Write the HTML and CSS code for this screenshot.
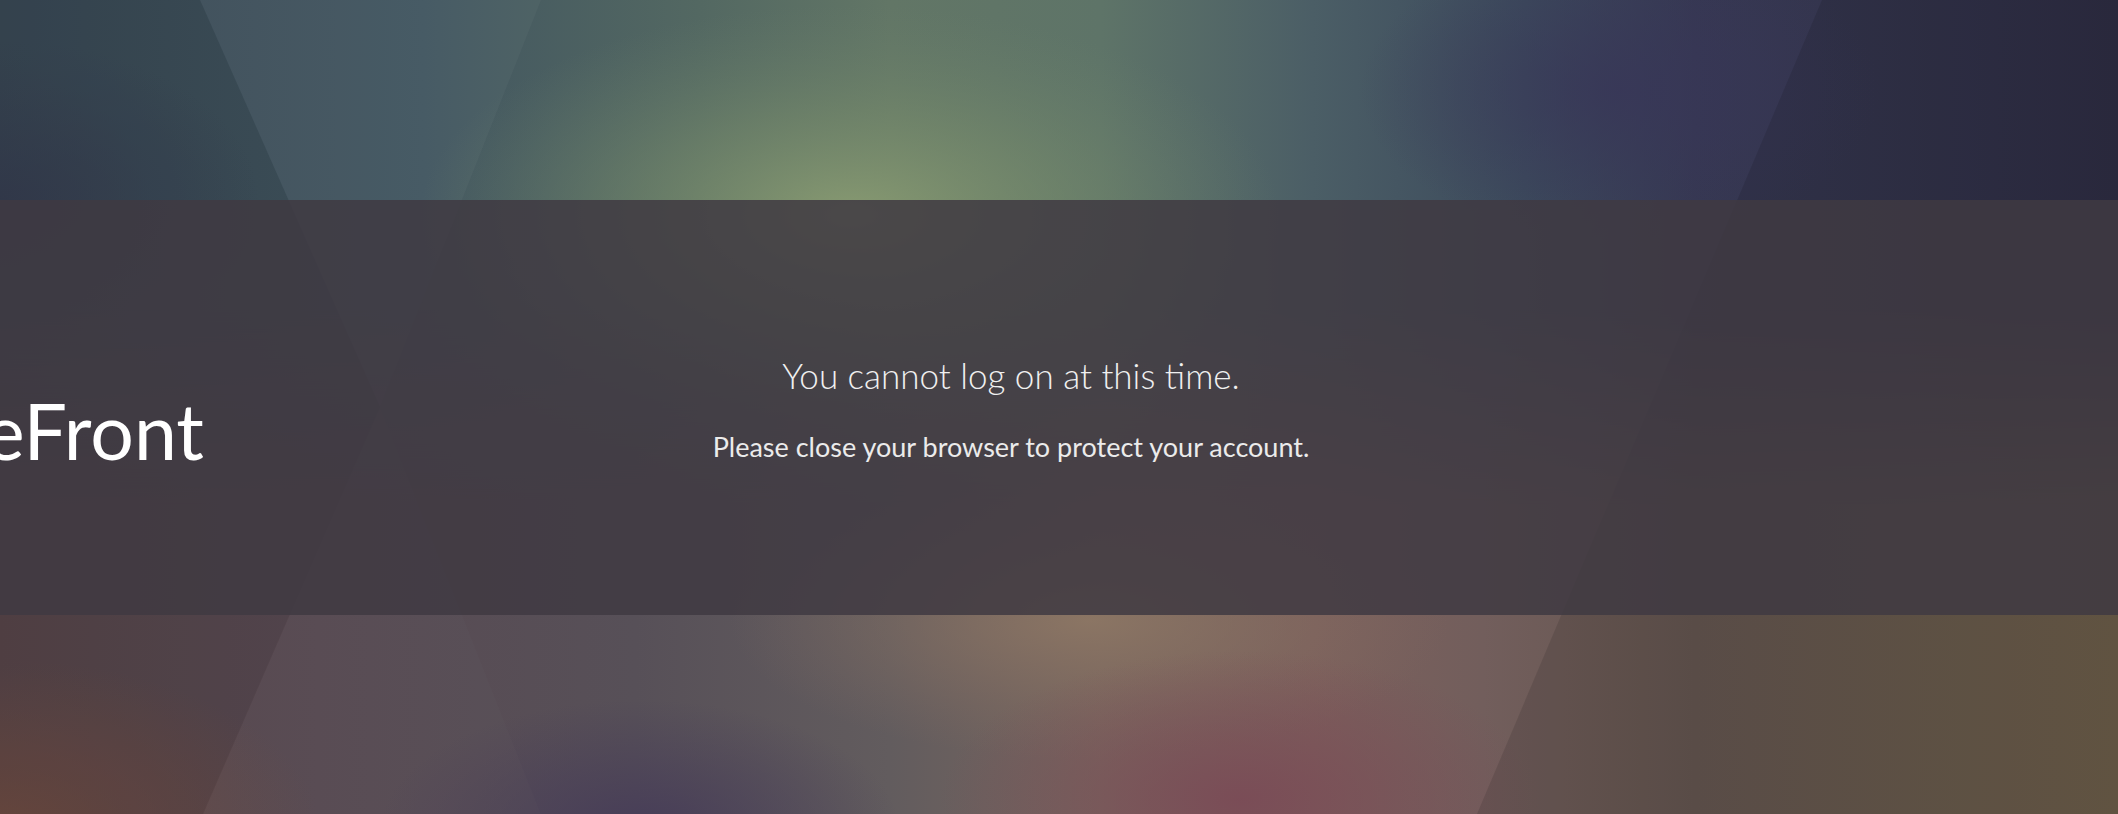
FILE: index.html
```html
<!DOCTYPE html>
<html lang="en">
<head>
<meta charset="utf-8">
<title>Sign In</title>
<link rel="stylesheet" href="styles.css">
</head>
<body>
<svg class="bg" viewBox="0 0 2118 814" preserveAspectRatio="none" aria-hidden="true">
  <defs>
    <linearGradient id="topBase" x1="0" y1="0" x2="1" y2="0">
      <stop offset="0" stop-color="#384753"/>
      <stop offset="0.2" stop-color="#425660"/>
      <stop offset="0.33" stop-color="#536862"/>
      <stop offset="0.42" stop-color="#627666"/>
      <stop offset="0.52" stop-color="#5e7468"/>
      <stop offset="0.62" stop-color="#4b5e66"/>
      <stop offset="0.72" stop-color="#3c4a5c"/>
      <stop offset="0.8" stop-color="#363852"/>
      <stop offset="1" stop-color="#2f2e44"/>
    </linearGradient>
    <linearGradient id="botBase" x1="0" y1="0" x2="1" y2="0">
      <stop offset="0" stop-color="#554348"/>
      <stop offset="0.15" stop-color="#584a52"/>
      <stop offset="0.3" stop-color="#575058"/>
      <stop offset="0.42" stop-color="#625c5e"/>
      <stop offset="0.52" stop-color="#78665e"/>
      <stop offset="0.62" stop-color="#7c605c"/>
      <stop offset="0.7" stop-color="#725e5c"/>
      <stop offset="0.8" stop-color="#655650"/>
      <stop offset="1" stop-color="#6c5e4a"/>
    </linearGradient>
    <linearGradient id="fadeV" x1="0" y1="0" x2="0" y2="1">
      <stop offset="0.38" stop-color="#fff" stop-opacity="0"/>
      <stop offset="0.62" stop-color="#fff" stop-opacity="1"/>
    </linearGradient>
    <mask id="lowerMask" maskUnits="userSpaceOnUse" x="0" y="0" width="2118" height="814">
      <rect x="0" y="0" width="2118" height="814" fill="url(#fadeV)"/>
    </mask>
    <radialGradient id="glowGreen" cx="0.5" cy="0.5" r="0.5">
      <stop offset="0" stop-color="#8a9c72" stop-opacity="0.95"/>
      <stop offset="0.5" stop-color="#7a8e6c" stop-opacity="0.5"/>
      <stop offset="1" stop-color="#6a806a" stop-opacity="0"/>
    </radialGradient>
    <radialGradient id="glowTan" cx="0.5" cy="0.5" r="0.5">
      <stop offset="0" stop-color="#8c7664" stop-opacity="0.95"/>
      <stop offset="1" stop-color="#806a60" stop-opacity="0"/>
    </radialGradient>
    <radialGradient id="glowPink" cx="0.5" cy="0.5" r="0.5">
      <stop offset="0" stop-color="#7a4a56" stop-opacity="0.9"/>
      <stop offset="1" stop-color="#7a4a56" stop-opacity="0"/>
    </radialGradient>
    <radialGradient id="glowPurple" cx="0.5" cy="0.5" r="0.5">
      <stop offset="0" stop-color="#463c58" stop-opacity="0.95"/>
      <stop offset="1" stop-color="#463c58" stop-opacity="0"/>
    </radialGradient>
    <radialGradient id="glowBrown" cx="0.5" cy="0.5" r="0.5">
      <stop offset="0" stop-color="#704c40" stop-opacity="0.9"/>
      <stop offset="1" stop-color="#704c40" stop-opacity="0"/>
    </radialGradient>
    <radialGradient id="glowNavy" cx="0.5" cy="0.5" r="0.5">
      <stop offset="0" stop-color="#383658" stop-opacity="0.8"/>
      <stop offset="1" stop-color="#383658" stop-opacity="0"/>
    </radialGradient>
    <radialGradient id="glowSlate" cx="0.5" cy="0.5" r="0.5">
      <stop offset="0" stop-color="#343a4e" stop-opacity="0.8"/>
      <stop offset="1" stop-color="#343a4e" stop-opacity="0"/>
    </radialGradient>
  </defs>
  <rect x="0" y="0" width="2118" height="814" fill="url(#topBase)"/>
  <rect x="0" y="0" width="2118" height="814" fill="url(#botBase)" mask="url(#lowerMask)"/>
  <ellipse cx="850" cy="215" rx="430" ry="210" fill="url(#glowGreen)"/>
  <ellipse cx="0" cy="200" rx="260" ry="160" fill="url(#glowSlate)"/>
  <ellipse cx="1620" cy="90" rx="260" ry="150" fill="url(#glowNavy)"/>
  <ellipse cx="1090" cy="620" rx="360" ry="140" fill="url(#glowTan)"/>
  <ellipse cx="1240" cy="800" rx="300" ry="150" fill="url(#glowPink)"/>
  <ellipse cx="640" cy="830" rx="260" ry="130" fill="url(#glowPurple)"/>
  <ellipse cx="0" cy="830" rx="320" ry="170" fill="url(#glowBrown)"/>
  <polygon points="0,0 200,0 380,407 203,814 0,814" fill="#000" fill-opacity="0.07"/>
  <polygon points="200,0 541,0 380,407" fill="#fff" fill-opacity="0.03"/>
  <polygon points="203,814 541,814 380,407" fill="#fff" fill-opacity="0.012"/>
  <polygon points="1822,0 2118,0 2118,814 1477,814" fill="#000" fill-opacity="0.11"/>
</svg>
<main class="page">
  <section class="band">
    <div class="brand">
      <span class="logo">eFront</span>
    </div>
    <div class="message">
      <p class="title">You cannot log on at this time.</p>
      <p class="detail">Please close your browser to protect your account.</p>
    </div>
  </section>
</main>
</body>
</html>
```
FILE: styles.css
```css
html, body {
  margin: 0;
  height: 100%;
  overflow: hidden;
}

body {
  position: relative;
  background: #3a3a48;
  font-family: Lato, "Open Sans", "Liberation Sans", sans-serif;
}

.bg {
  position: absolute;
  inset: 0;
  width: 100%;
  height: 100%;
  display: block;
  z-index: 0;
}

.page {
  position: relative;
  z-index: 1;
  padding-top: 200px;
}

.band {
  height: 415px;
  background: rgba(64, 57, 66, 0.85);
  display: grid;
  grid-template-columns: 200px 1622px 1fr;
}

.brand {
  padding-top: 184px;
}

.logo {
  display: block;
  margin-left: -16px;
  font-size: 77px;
  line-height: 92.4px;
  color: #ffffff;
  white-space: nowrap;
}

.message {
  text-align: center;
  padding-top: 154px;
  color: #f0f0f0;
}

.title {
  margin: 0;
  font-size: 35px;
  line-height: 42px;
  font-weight: 300;
}

.detail {
  margin: 34px 0 0;
  font-size: 27px;
  line-height: 34px;
  color: #ebebeb;
}
```
